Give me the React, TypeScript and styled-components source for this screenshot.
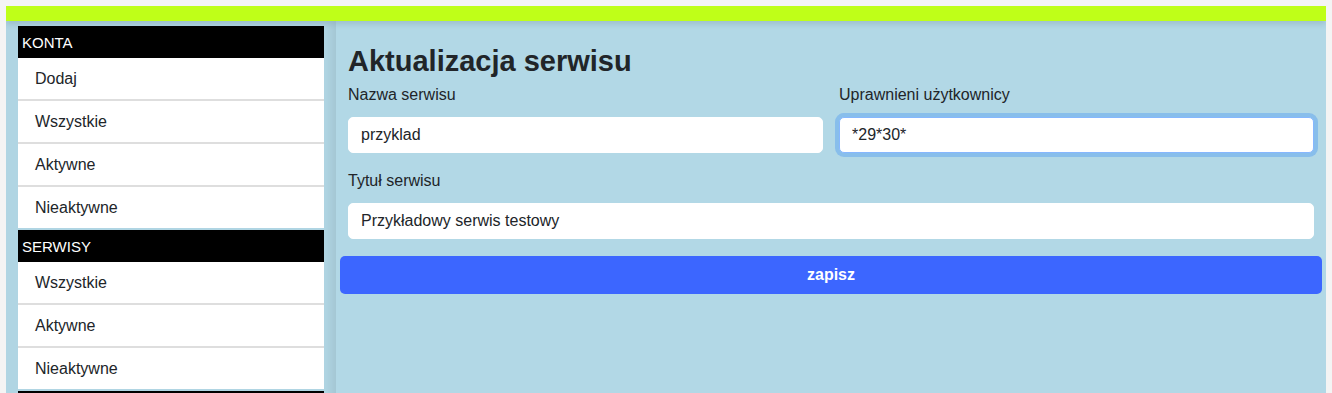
import React from "react";
import styled, { createGlobalStyle, css } from "styled-components";

const GlobalStyle = createGlobalStyle`
  html, body { height: 100%; }
  body {
    margin: 6px;
    background: #f4f4f4;
    font-family: "Liberation Sans", Arial, sans-serif;
    color: #212529;
  }
  * { box-sizing: border-box; }
`;

const TopBar = styled.div`
  height: 15px;
  background: #bfff18;
  position: relative;
  z-index: 2;
  box-shadow: 0 3px 6px rgba(0, 0, 0, 0.12);
`;

const Layout = styled.div`
  display: grid;
  grid-template-columns: 330px 1fr;
  background: #b2d8e6;
  min-height: 420px;
`;

const Sidebar = styled.nav`
  padding: 5px 12px 0 12px;
  background: #b0d5e3;
`;

const Section = styled.section`
  margin-bottom: 2px;
`;

const SectionHeader = styled.div`
  height: 32px;
  background: #000;
  color: #fff;
  font-size: 15px;
  display: flex;
  align-items: center;
  padding-left: 4px;
`;

const NavItem = styled.a`
  box-sizing: content-box;
  display: flex;
  align-items: center;
  height: 41px;
  background: #fff;
  padding-left: 17px;
  font-size: 16px;
  color: #212529;
  text-decoration: none;
  & + & {
    border-top: 2px solid #dedede;
  }
`;

const Main = styled.main`
  padding: 23px 4px 0;
  position: relative;
  z-index: 1;
  box-shadow: -5px 0 8px rgba(0, 0, 0, 0.07);
  background: #b2d8e6;
`;

const Title = styled.h1`
  margin: 0 8px 4px;
  font-size: 29px;
  line-height: 35px;
  font-weight: 700;
  color: #212529;
`;

const Row = styled.div<{ $cols: number }>`
  display: grid;
  grid-template-columns: repeat(${(p) => p.$cols}, 1fr);
`;

const Field = styled.div`
  padding: 0 8px;
  margin-bottom: 16px;
`;

const Label = styled.label`
  display: block;
  font-size: 16px;
  line-height: 24px;
  margin-bottom: 10px;
  color: #212529;
`;

const Input = styled.input<{ $focused?: boolean }>`
  display: block;
  width: 100%;
  height: 36px;
  padding: 0 12px;
  border: 1px solid #fff;
  border-radius: 5px;
  background: #fff;
  font-family: inherit;
  font-size: 16px;
  color: #212529;
  outline: none;
  ${(p) =>
    p.$focused &&
    css`
      border-color: #86b7fe;
      box-shadow: 0 0 0 4px rgba(13, 110, 253, 0.25);
    `}
`;

const SaveButton = styled.button`
  display: block;
  width: 100%;
  height: 38px;
  margin-top: 1px;
  border: none;
  border-radius: 5px;
  background: #3c66ff;
  color: #fff;
  font-family: inherit;
  font-size: 16px;
  font-weight: 700;
`;

const sections = [
  { title: "KONTA", items: ["Dodaj", "Wszystkie", "Aktywne", "Nieaktywne"] },
  { title: "SERWISY", items: ["Wszystkie", "Aktywne", "Nieaktywne"] },
];

export default function App() {
  return (
    <>
      <GlobalStyle />
      <TopBar />
      <Layout>
        <Sidebar>
          {sections.map((s) => (
            <Section key={s.title}>
              <SectionHeader>{s.title}</SectionHeader>
              {s.items.map((it) => (
                <NavItem key={it} href="#">
                  {it}
                </NavItem>
              ))}
            </Section>
          ))}
          <Section>
            <SectionHeader />
          </Section>
        </Sidebar>
        <Main>
          <Title>Aktualizacja serwisu</Title>
          <Row $cols={2}>
            <Field>
              <Label>Nazwa serwisu</Label>
              <Input defaultValue="przyklad" />
            </Field>
            <Field>
              <Label>Uprawnieni użytkownicy</Label>
              <Input defaultValue="*29*30*" $focused autoFocus />
            </Field>
          </Row>
          <Row $cols={1}>
            <Field>
              <Label>Tytuł serwisu</Label>
              <Input defaultValue="Przykładowy serwis testowy" />
            </Field>
          </Row>
          <SaveButton>zapisz</SaveButton>
        </Main>
      </Layout>
    </>
  );
}
